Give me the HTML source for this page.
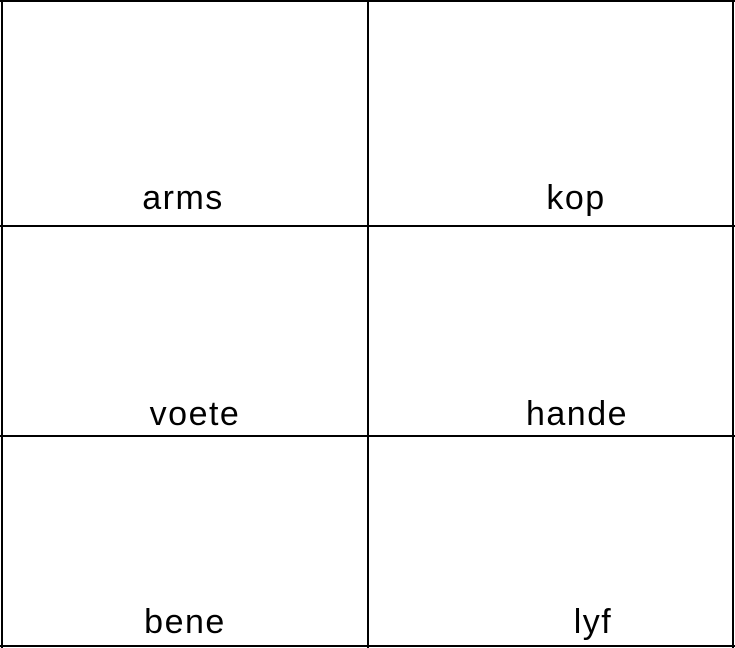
<!DOCTYPE html>
<html><head><style>
body{margin:0;width:735px;height:648px;background:#fff;position:relative;overflow:hidden;font-family:"Liberation Sans",sans-serif;}
.l{position:absolute;background:#000;}
.t{position:absolute;font-size:34px;line-height:1;color:#000;transform:translateX(-50%);white-space:nowrap;letter-spacing:1.5px;}
</style></head><body>
<div class="l" style="left:0;top:0;width:735px;height:2px"></div>
<div class="l" style="left:0;top:225px;width:735px;height:2px"></div>
<div class="l" style="left:0;top:435px;width:735px;height:2px"></div>
<div class="l" style="left:0;top:645px;width:735px;height:2px"></div>
<div class="l" style="left:1px;top:0;width:2px;height:648px"></div>
<div class="l" style="left:367px;top:0;width:2px;height:648px"></div>
<div class="l" style="left:732px;top:0;width:2px;height:648px"></div>
<div class="t" style="left:183px;top:181px">arms</div>
<div class="t" style="left:576px;top:181px">kop</div>
<div class="t" style="left:195px;top:397px">voete</div>
<div class="t" style="left:577px;top:397px">hande</div>
<div class="t" style="left:185px;top:605px">bene</div>
<div class="t" style="left:593px;top:605px">lyf</div>
</body></html>
